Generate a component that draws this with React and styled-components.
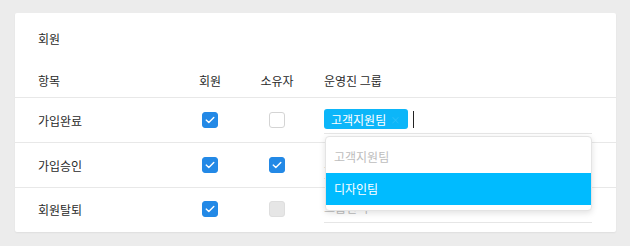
import React from "react";
import styled, { createGlobalStyle } from "styled-components";

const GlobalStyle = createGlobalStyle`
  html, body {
    margin: 0;
    padding: 0;
    background: #ececec;
  }
  body {
    font-family: "Noto Sans CJK KR", "Noto Sans", sans-serif;
    color: #2a2a2a;
  }
  * {
    box-sizing: border-box;
  }
`;

const Page = styled.div`
  padding: 13px 14px 14px 15px;
`;

const Card = styled.div`
  background: #fff;
  border-radius: 2px;
  box-shadow: 0 1px 2px rgba(0, 0, 0, 0.06);
  width: 601px;
  height: 219px;
`;

const Title = styled.div`
  font-size: 12px;
  line-height: 18px;
  padding: 17px 23px 15px;
`;

const Row = styled.div`
  display: grid;
  grid-template-columns: 152px 40px 94px 1fr;
  align-items: center;
  padding: 0 24px 0 23px;
  height: ${(p) => p.$height}px;
  border-bottom: ${(p) => (p.$last ? "none" : "1px solid #e8e8e8")};
  font-size: 12px;
`;

const Cell = styled.div`
  display: flex;
  justify-content: ${(p) => (p.$center ? "center" : "flex-start")};
  align-items: center;
  position: relative;
`;

const Box = styled.span`
  width: 16px;
  height: 16px;
  border-radius: 3px;
  display: inline-flex;
  align-items: center;
  justify-content: center;
  background: ${(p) => (p.$checked ? "#2389e6" : p.$disabled ? "#e6e6e6" : "#fff")};
  border: 1px solid
    ${(p) => (p.$checked ? "#2389e6" : p.$disabled ? "#dedede" : "#d4d4d4")};
`;

const Field = styled.div`
  flex: 1;
  height: 25px;
  display: flex;
  align-items: center;
  border-bottom: 1px solid #e6e6e6;
  margin-top: 2px;
`;

const Placeholder = styled.span`
  color: #bdbdbd;
  margin-bottom: 5px;
`;

const Tag = styled.span`
  display: inline-flex;
  align-items: center;
  height: 20px;
  padding: 0 8px 0 7px;
  border-radius: 3px;
  background: #0cb6f9;
  color: #fff;
  margin-bottom: 3px;
`;

const TagClose = styled.span`
  color: rgba(255, 255, 255, 0.14);
  font-size: 10px;
  margin-left: 4px;
`;

const Caret = styled.span`
  width: 1px;
  height: 17px;
  background: #222;
  margin-left: 5px;
  margin-bottom: 3px;
`;

const Menu = styled.div`
  position: absolute;
  z-index: 2;
  top: calc(100% + 2px);
  left: 1px;
  right: 0;
  background: #fff;
  border: 1px solid #e4e4e4;
  border-radius: 4px;
  box-shadow: 0 2px 6px rgba(0, 0, 0, 0.12);
  padding: 4px 0 5px;
`;

const Option = styled.div`
  height: 32px;
  display: flex;
  align-items: center;
  padding-left: 8px;
  color: ${(p) => (p.$active ? "#fff" : p.$muted ? "#bdbdbd" : "#333")};
  background: ${(p) => (p.$active ? "#00bbff" : "transparent")};
`;

const Check = ({ checked, disabled }) => (
  <Box $checked={checked} $disabled={disabled}>
    {checked && (
      <svg width="10" height="8" viewBox="0 0 10 8">
        <path
          d="M1.2 4.1 L3.8 6.5 L8.8 1.4"
          fill="none"
          stroke="#fff"
          strokeWidth="1.4"
          strokeLinecap="round"
          strokeLinejoin="round"
        />
      </svg>
    )}
  </Box>
);

const rows = [
  { name: "가입완료", member: true, owner: false, selected: true },
  { name: "가입승인", member: true, owner: true },
  { name: "회원탈퇴", member: true, owner: false, ownerDisabled: true },
];

export default function App() {
  return (
    <>
      <GlobalStyle />
      <Page>
        <Card>
          <Title>회원</Title>
          <Row $height={35}>
            <Cell>항목</Cell>
            <Cell $center>회원</Cell>
            <Cell $center>소유자</Cell>
            <Cell>운영진 그룹</Cell>
          </Row>
          {rows.map((r, i) => (
            <Row key={r.name} $height={i === rows.length - 1 ? 42 : 45} $last={i === rows.length - 1}>
              <Cell>{r.name}</Cell>
              <Cell $center>
                <Check checked={r.member} />
              </Cell>
              <Cell $center>
                <Check checked={r.owner} disabled={r.ownerDisabled} />
              </Cell>
              <Cell>
                <Field>
                  {r.selected ? (
                    <>
                      <Tag>
                        고객지원팀<TagClose>×</TagClose>
                      </Tag>
                      <Caret />
                    </>
                  ) : (
                    <Placeholder>그룹선택</Placeholder>
                  )}
                </Field>
                {r.selected && (
                  <Menu>
                    <Option $muted>고객지원팀</Option>
                    <Option $active>디자인팀</Option>
                  </Menu>
                )}
              </Cell>
            </Row>
          ))}
        </Card>
      </Page>
    </>
  );
}
